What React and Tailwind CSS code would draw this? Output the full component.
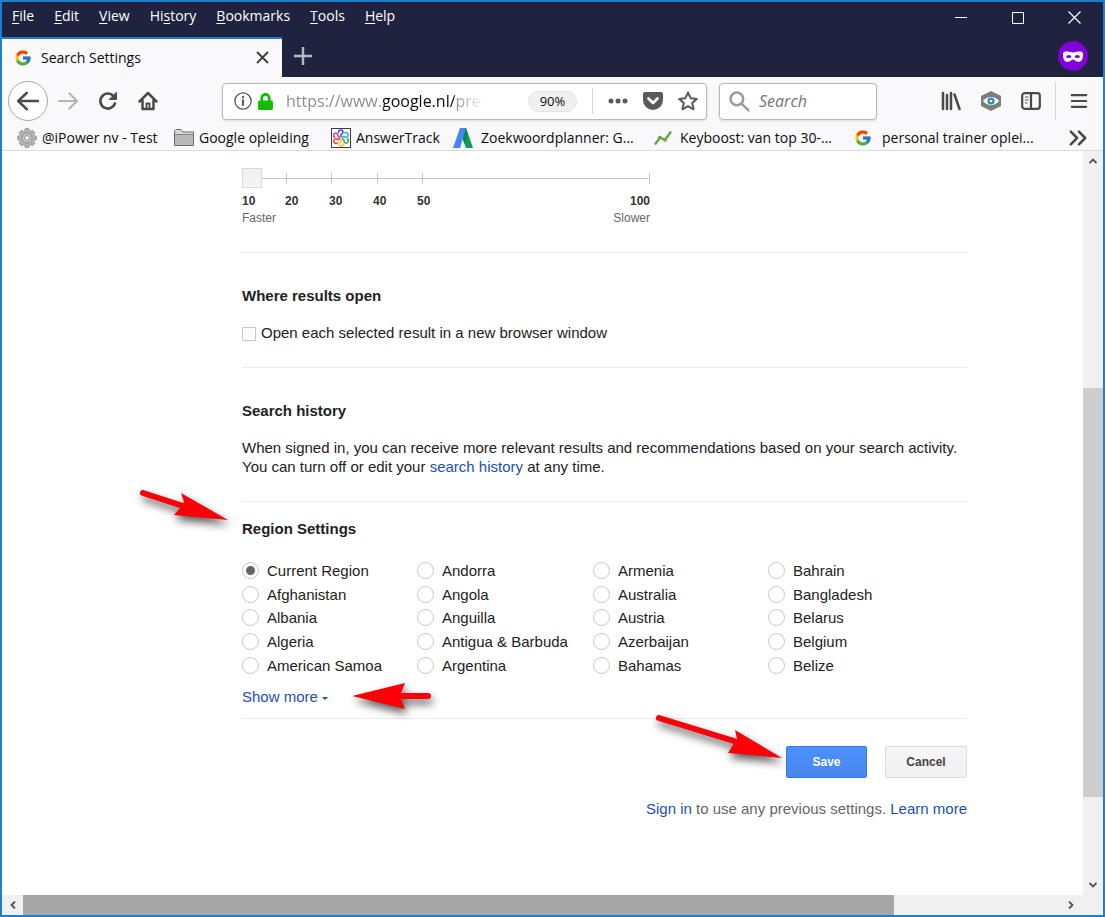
import { FcGoogle } from "react-icons/fc";
import { FaLock } from "react-icons/fa";

const MENU = [
  ["", "F", "ile"],
  ["", "E", "dit"],
  ["", "V", "iew"],
  ["Hi", "s", "tory"],
  ["", "B", "ookmarks"],
  ["", "T", "ools"],
  ["", "H", "elp"],
];

const REGIONS = [
  "Current Region", "Afghanistan", "Albania", "Algeria", "American Samoa",
  "Andorra", "Angola", "Anguilla", "Antigua & Barbuda", "Argentina",
  "Armenia", "Australia", "Austria", "Azerbaijan", "Bahamas",
  "Bahrain", "Bangladesh", "Belarus", "Belgium", "Belize",
];

function Stroke({ size = 20, width = 2, className = "", children }) {
  return (
    <svg
      width={size}
      height={size}
      viewBox="0 0 20 20"
      fill="none"
      stroke="currentColor"
      strokeWidth={width}
      strokeLinecap="round"
      strokeLinejoin="round"
      className={`shrink-0 ${className}`}
      aria-hidden="true"
    >
      {children}
    </svg>
  );
}

function IconButton({ label, className = "", children }) {
  return (
    <button aria-label={label} className={`flex h-10 w-10 shrink-0 items-center justify-center text-[#4a4a4c] ${className}`}>
      {children}
    </button>
  );
}

function GearIcon() {
  return (
    <svg width="20" height="20" viewBox="0 0 20 20" className="shrink-0" aria-hidden="true">
      {[0, 45, 90, 135].map((angle) => (
        <rect key={angle} x="7.800" y=".6" width="4.400" height="18.800" rx="1.200" fill="#b4b4b4" stroke="#8c8c8c" strokeWidth=".8" transform={`rotate(${angle} 10 10)`} />
      ))}
      <circle cx="10" cy="10" r="7" fill="#b4b4b4" />
      <circle cx="10" cy="10" r="5" fill="#c9c9c9" stroke="#8f8f8f" />
      <circle cx="10" cy="10" r="2.400" fill="#f9f9fb" stroke="#8f8f8f" />
    </svg>
  );
}

function FolderIcon() {
  return (
    <svg width="20" height="18" viewBox="0 0 20 18" className="shrink-0" aria-hidden="true">
      <path d="M.5 16.500V2L2 .5h5L9 3h10.500v13.500z" fill="#d6d6d6" stroke="#6b6b6b" />
      <path d="M1 6h18v10H1z" fill="#b9b9b9" />
      <path d="M1 5.500h18" stroke="#858585" />
    </svg>
  );
}

function AnswerTrackIcon() {
  const petals = ["#3b49c8", "#35a8e0", "#3fae49", "#f2c230", "#e8453c", "#d9429a"];
  return (
    <svg width="20" height="20" viewBox="0 0 20 20" className="shrink-0" aria-hidden="true">
      <rect x=".5" y=".5" width="19" height="19" fill="#fff" stroke="#3d3d46" />
      {petals.map((color, i) => (
        <path
          key={color}
          d="M10 8.500V6.500C12.500 6 13 2 10 2C8.500 2 7.500 3 7.500 4.200"
          fill="none"
          stroke={color}
          strokeWidth="1.500"
          strokeLinecap="round"
          transform={`rotate(${i * 60} 10 10)`}
        />
      ))}
    </svg>
  );
}

function AdwordsIcon() {
  return (
    <svg width="20" height="20" viewBox="0 0 20 20" className="shrink-0" aria-hidden="true">
      <path d="M7 0h6l7 20h-7L9 9z" fill="#0f9d58" />
      <path d="M7 0h6L7 20H0z" fill="#4285f4" />
      <path d="M13 0l2 6-3.500 10L9.800 11z" fill="#0b8a4c" />
    </svg>
  );
}

function TrendIcon() {
  return (
    <svg width="18" height="16" viewBox="0 0 18 16" className="shrink-0" aria-hidden="true">
      <path d="M1 14.500L6 7.500l5 2.500L17 1.500" fill="none" stroke="#6da544" strokeWidth="2.400" strokeLinejoin="round" />
      <circle cx="6" cy="7.500" r="1.800" fill="#6da544" />
      <circle cx="11" cy="10" r="1.800" fill="#6da544" />
    </svg>
  );
}

function PocketIcon() {
  return (
    <svg width="20" height="18" viewBox="0 0 20 18" aria-hidden="true">
      <path d="M2 0h16a2 2 0 0 1 2 2v6a10 10 0 0 1-20 0V2a2 2 0 0 1 2-2z" fill="#5a5a5c" />
      <path d="M5.500 6.500L10 11l4.500-4.500" fill="none" stroke="#fff" strokeWidth="2.600" strokeLinecap="round" strokeLinejoin="round" />
    </svg>
  );
}

function MaskIcon() {
  return (
    <svg width="30" height="30" viewBox="0 0 30 30" className="mr-[15px]" aria-label="Private browsing" role="img">
      <circle cx="15" cy="15" r="15" fill="#8000d7" />
      <path
        d="M5 13C5 11 7 10.200 9.500 10.400C12 10.600 13 11.400 15 11.400s3-.8 5.500-1C23 10.200 25 11 25 13c0 4.500-1 7.800-4.500 7.800-3 0-4-2.300-5.500-2.300s-2.500 2.300-5.500 2.300C6 20.800 5 17.500 5 13z"
        fill="#fff"
      />
      <ellipse cx="10.700" cy="15.400" rx="2.600" ry="1.500" fill="#8000d7" />
      <ellipse cx="19.300" cy="15.400" rx="2.600" ry="1.500" fill="#8000d7" />
    </svg>
  );
}

function Bookmark({ icon, children, className = "" }) {
  return (
    <a href="#" className={`flex shrink-0 items-center whitespace-nowrap ${className}`}>
      {icon}
      {children}
    </a>
  );
}

function TitleBar() {
  return (
    <div className="flex h-[35px] items-center text-white">
      <nav className="flex flex-1 gap-5 pb-2 pl-[10px]">
        {MENU.map(([before, key, after]) => (
          <button key={key + after}>
            {before}
            <span className="underline underline-offset-2">{key}</span>
            {after}
          </button>
        ))}
      </nav>
      <div className="flex items-center pb-1">
        <button aria-label="Minimize" className="flex w-[57px] justify-center">
          <svg width="12" height="12" viewBox="0 0 12 12"><path d="M0 5.500h12" stroke="#fff" /></svg>
        </button>
        <button aria-label="Maximize" className="flex w-[57px] justify-center">
          <svg width="12" height="12" viewBox="0 0 12 12"><path d="M.5.5h11v11H.5z" fill="none" stroke="#fff" /></svg>
        </button>
        <button aria-label="Close" className="flex w-[57px] justify-center">
          <svg width="13" height="13" viewBox="0 0 13 13"><path d="M.5.5l12 12M12.500.5l-12 12" stroke="#fff" strokeWidth="1.200" /></svg>
        </button>
      </div>
    </div>
  );
}

function TabStrip() {
  return (
    <div className="flex h-10 items-stretch">
      <div className="flex w-[280px] items-center border-t-2 border-[#2478d4] bg-[#f9f9fb] pb-px pl-3 pr-[13px]">
        <FcGoogle size={18} />
        <span className="ml-[9px] flex-1">Search Settings</span>
        <button aria-label="Close tab" className="text-[#3a3a3c]">
          <svg width="13" height="13" viewBox="0 0 13 13"><path d="M1 1l11 11M12 1L1 12" stroke="currentColor" strokeWidth="1.800" /></svg>
        </button>
      </div>
      <button aria-label="New tab" className="flex w-[42px] items-center justify-center pb-[2px]">
        <svg width="18" height="18" viewBox="0 0 18 18"><path d="M9 0v18M0 9h18" stroke="#b9bac4" strokeWidth="2.400" /></svg>
      </button>
      <div className="flex flex-1 items-center justify-end pb-[2px]">
        <MaskIcon />
      </div>
    </div>
  );
}

function NavBar() {
  return (
    <div className="flex h-12 items-center pl-[6px]">
      <IconButton label="Back" className="rounded-full border border-[#a9a9ab] bg-white">
        <Stroke size={22} width={2.2}><path d="M1 10h18M9 2.500L1 10l8 7.500" /></Stroke>
      </IconButton>
      <IconButton label="Forward" className="text-[#b4b4b6]!">
        <Stroke width={2.2}><path d="M1 10h18M11.500 2.500L19 10l-7.500 7.500" /></Stroke>
      </IconButton>
      <IconButton label="Reload">
        <Stroke width={2.7}>
          <path d="M17 12.500A7.500 7.500 0 1 1 15.500 5" />
          <path d="M18.500 1.500v7h-7z" fill="currentColor" strokeWidth="1" />
        </Stroke>
      </IconButton>
      <IconButton label="Home">
        <Stroke width={2.5}>
          <path d="M1.500 10.500L10 2l8.500 8.500M4.500 9.500V18h11V9.500" />
          <path d="M8.500 17.500v-5h3v5" strokeWidth="1.800" />
        </Stroke>
      </IconButton>

      <div className="ml-[54px] flex h-[37px] min-w-0 flex-1 items-center rounded-sm border border-[#b8b8ba] bg-white shadow-sm">
        <Stroke size={18} width={1.5} className="ml-[11px] text-[#5a5a5c]">
          <circle cx="10" cy="10" r="9" />
          <path d="M10 9v5.500" strokeWidth="2.200" />
          <path d="M10 5.500v.3" strokeWidth="2.500" />
        </Stroke>
        <FaLock size={17} className="ml-[5px] shrink-0 text-[#12bc00]" />
        <input
          aria-label="Address"
          defaultValue="https://www.google.nl/preferences"
          className="ml-3 w-[198px] bg-[linear-gradient(to_right,#8a8a8c_97px,#0c0c0d_97px,#0c0c0d_168px,#8a8a8c_169px,transparent_198px)] bg-clip-text text-base text-transparent outline-none"
        />
        <div className="flex-1" />
        <button className="h-[21px] w-[49px] shrink-0 rounded-full border border-[#e3e3e5] bg-[#f0f0f1] text-[13px] leading-[19px]">90%</button>
        <div className="mx-[15px] h-[26px] w-px bg-[#d7d7db]" />
        <button aria-label="Page actions" className="shrink-0 text-[#5a5a5c]">
          <svg width="20" height="6" viewBox="0 0 20 6" fill="currentColor"><circle cx="3" cy="3" r="2.500" /><circle cx="10" cy="3" r="2.500" /><circle cx="17" cy="3" r="2.500" /></svg>
        </button>
        <button aria-label="Save to Pocket" className="ml-[15px] shrink-0"><PocketIcon /></button>
        <button aria-label="Bookmark this page" className="ml-[15px] mr-2 shrink-0 text-[#5a5a5c]">
          <Stroke width={2}><path d="M10 1.500l2.600 5.700 6.200.7-4.600 4.200 1.300 6.200L10 15.200l-5.500 3.100 1.300-6.200L1.200 7.900l6.200-.7z" /></Stroke>
        </button>
      </div>

      <div className="ml-3 flex h-[37px] w-[158px] shrink-0 items-center rounded-sm border border-[#b8b8ba] bg-white shadow-sm">
        <Stroke size={21} width={2.4} className="ml-[9px] text-[#9b9b9d]">
          <circle cx="7.500" cy="7.500" r="6" />
          <path d="M12 12l6.500 6.500" />
        </Stroke>
        <input aria-label="Search" placeholder="Search" className="ml-[9px] w-full min-w-0 text-base italic outline-none placeholder:text-[#757577]" />
      </div>

      <IconButton label="Library" className="ml-[54px]">
        <Stroke width={2.5}><path d="M2 2v16M6 4v14M10 2v16M13.500 3.500l5 14.500" /></Stroke>
      </IconButton>
      <IconButton label="Preview extension">
        <svg width="20" height="20" viewBox="0 0 20 20">
          <path d="M10 0l10 5v10l-10 5L0 15V5z" fill="#7d7d7f" />
          <path d="M2 10c4-5.500 12-5.500 16 0-4 5.500-12 5.500-16 0z" fill="#fff" />
          <circle cx="10" cy="10" r="3.600" fill="#2790b5" />
          <circle cx="10" cy="10" r="1.300" fill="#fff" />
        </svg>
      </IconButton>
      <IconButton label="Sidebars">
        <Stroke width={2.2}>
          <rect x="1.200" y="2.200" width="17.600" height="15.600" rx="2.500" />
          <path d="M10 2v16" />
          <path d="M4.500 6h2.500M4.500 9h2.500M4.500 12h1.500" strokeWidth="1.200" />
        </Stroke>
      </IconButton>
      <div className="ml-1 h-[38px] w-px shrink-0 bg-[#d7d7db]" />
      <IconButton label="Open menu" className="ml-[3px] mr-1">
        <Stroke size={18} width={2.4}><path d="M2 3.500h16M2 10h16M2 16.500h16" /></Stroke>
      </IconButton>
    </div>
  );
}

function BookmarksBar() {
  return (
    <div className="flex h-[26px] items-center border-b border-[#dcdce0] pl-[15px]">
      <Bookmark className="w-[157px] gap-[5px]" icon={<GearIcon />}>@iPower nv - Test</Bookmark>
      <Bookmark className="w-[157px] gap-[5px]" icon={<FolderIcon />}>Google opleiding</Bookmark>
      <Bookmark className="w-[122px] gap-[5px]" icon={<AnswerTrackIcon />}>AnswerTrack</Bookmark>
      <Bookmark className="w-[201px] gap-2" icon={<AdwordsIcon />}>Zoekwoordplanner: G...</Bookmark>
      <Bookmark className="w-[200px] gap-2" icon={<TrendIcon />}>Keyboost: van top 30-...</Bookmark>
      <Bookmark className="gap-[10px]" icon={<FcGoogle size={18} />}>personal trainer oplei...</Bookmark>
      <div className="flex-1" />
      <button aria-label="More bookmarks" className="mr-4 text-[#4a4a4c]">
        <Stroke size={18} width={2.8}><path d="M2 3l7 7-7 7M11 3l7 7-7 7" /></Stroke>
      </button>
    </div>
  );
}

function Arrow({ width, height, shaft, head, className }) {
  return (
    <svg
      width={width}
      height={height}
      viewBox={`0 0 ${width} ${height}`}
      className={`pointer-events-none absolute overflow-visible drop-shadow-[2px_5px_4px_rgba(0,0,0,0.65)] ${className}`}
      aria-hidden="true"
    >
      <path d={shaft} stroke="#fb0007" strokeWidth="6" strokeLinecap="round" />
      <path d={head} fill="#fb0007" />
    </svg>
  );
}

function ResultsSlider() {
  return (
    <section className="h-[101px] w-[408px] pt-[17px] text-xs">
      <div className="grid h-5 items-center">
        <div className="col-start-1 row-start-1 grid h-[11px] grid-cols-[45px_45px_46px_45px_1fr]">
          {[20, 30, 40, 50, 100].map((n) => (
            <span key={n} className="border-r border-[#c8c8c8]" />
          ))}
        </div>
        <input
          type="range"
          aria-label="Results per page"
          min="10"
          max="100"
          step="10"
          defaultValue="10"
          className="col-start-1 row-start-1 h-5 w-full appearance-none bg-transparent [&::-webkit-slider-runnable-track]:h-5 [&::-webkit-slider-runnable-track]:bg-[linear-gradient(#c8c8c8,#c8c8c8)] [&::-webkit-slider-runnable-track]:bg-[length:100%_1px] [&::-webkit-slider-runnable-track]:bg-center [&::-webkit-slider-runnable-track]:bg-no-repeat [&::-webkit-slider-thumb]:h-5 [&::-webkit-slider-thumb]:w-5 [&::-webkit-slider-thumb]:appearance-none [&::-webkit-slider-thumb]:border [&::-webkit-slider-thumb]:border-[#dadada] [&::-webkit-slider-thumb]:bg-[#f2f2f2]"
        />
      </div>
      <div className="mt-1 grid grid-cols-[43px_44px_44px_44px_1fr_auto] font-bold leading-[18px] text-[#333]">
        <span>10</span>
        <span>20</span>
        <span>30</span>
        <span>40</span>
        <span>50</span>
        <span>100</span>
      </div>
      <div className="flex justify-between leading-4 text-[#666]">
        <span>Faster</span>
        <span>Slower</span>
      </div>
    </section>
  );
}

function Settings() {
  return (
    <main className="min-w-0 flex-1 overflow-hidden bg-white pb-[74px] pl-[240px] text-[15px] leading-[19px] text-[#222]">
      <form className="max-w-[725px]" onSubmit={(e) => e.preventDefault()}>
        <ResultsSlider />

        <section className="h-[115px] border-t border-[#ebebeb] pt-[33px]">
          <h2 className="font-bold">Where results open</h2>
          <label className="mt-[18px] flex items-center">
            <input type="checkbox" className="mr-[5px] mt-[2px] h-[14px] w-[14px] appearance-none rounded-[1px] border border-[#c6c6c6]" />
            Open each selected result in a new browser window
          </label>
        </section>

        <section className="h-[134px] border-t border-[#ebebeb] pt-[33px]">
          <h2 className="font-bold">Search history</h2>
          <p className="mt-[18px]">
            When signed in, you can receive more relevant results and recommendations based on your search activity. You can turn off or edit your{" "}
            <a href="#" className="text-[#1a4fb8]">search history</a> at any time.
          </p>
        </section>

        <section className="relative h-[217px] border-t border-[#ebebeb] pt-[17px]">
          <h2 className="font-bold">Region Settings</h2>
          <Arrow
            width={96}
            height={36}
            className="-left-[104px] -top-[14px]"
            shaft="M5 5L45 18"
            head="M43 5L90 32L36 27L42 20L46 14Z"
          />
          <div className="mt-[21px] grid h-[118px] grid-flow-col grid-cols-[175px_176px_175px_1fr] grid-rows-5">
            {REGIONS.map((name, i) => (
              <label key={name} className="flex items-center gap-2 whitespace-nowrap">
                <input
                  type="radio"
                  name="region"
                  defaultChecked={i === 0}
                  className="h-[17px] w-[17px] shrink-0 appearance-none rounded-full border border-[#c6c6c6] checked:bg-[radial-gradient(circle,#666_4px,transparent_5px)]"
                />
                {name}
              </label>
            ))}
          </div>
          <div className="mt-[10px] flex">
            <div className="relative">
              <button type="button" className="flex items-center gap-1 text-[#1a4fb8]">
                Show more
                <svg width="6" height="3" viewBox="0 0 6 3" className="mt-1"><path d="M0 0h6L3 3z" fill="currentColor" /></svg>
              </button>
              <Arrow
                width={84}
                height={28}
                className="left-[108px] -top-[5px]"
                shaft="M50 14H78"
                head="M2 14L55 1L51 11V17L55 27Z"
              />
            </div>
          </div>
        </section>

        <section className="border-t border-[#ebebeb] pt-[27px]">
          <div className="flex justify-end gap-[18px] text-xs font-bold">
            <div className="relative">
              <button className="h-8 w-[81px] rounded-xs border border-[#3079ed] bg-linear-to-b from-[#4d90fe] to-[#4787ed] text-white">Save</button>
              <Arrow
                width={130}
                height={46}
                className="-left-[132px] -top-[33px]"
                shaft="M5 5L80 28"
                head="M81 17L128 45L74 40L79 32L83 26Z"
              />
            </div>
            <button type="button" className="h-8 w-[82px] rounded-xs border border-[#dcdcdc] bg-linear-to-b from-[#f5f5f5] to-[#f1f1f1] text-[#444]">Cancel</button>
          </div>
          <p className="mt-[21px] text-right text-[#666]">
            <a href="#" className="text-[#1a4fb8]">Sign in</a> to use any previous settings.{" "}
            <a href="#" className="text-[#1a4fb8]">Learn more</a>
          </p>
        </section>
      </form>
    </main>
  );
}

function ScrollArrow({ label, d, className }) {
  return (
    <button aria-label={label} className={`flex shrink-0 items-center justify-center ${className}`}>
      <svg width="8" height="8" viewBox="0 0 8 8"><path d={d} fill="none" stroke="#505050" strokeWidth="1.800" /></svg>
    </button>
  );
}

export default function App() {
  return (
    <div className="flex min-h-screen flex-col border-2 border-[#1c80d2] bg-[#f0f0f0] font-['Liberation_Sans',Arial,sans-serif]">
      <header className="bg-[#1f2340] font-['Open_Sans','Noto_Sans',sans-serif] text-sm leading-5 text-[#0c0c0d]">
        <TitleBar />
        <TabStrip />
        <div className="bg-[#f9f9fb]">
          <NavBar />
          <BookmarksBar />
        </div>
      </header>

      <div className="flex flex-1">
        <Settings />
        <div className="flex w-5 shrink-0 flex-col">
          <ScrollArrow label="Scroll up" d="M.5 6L4 2.500 7.500 6" className="h-5" />
          <div className="grow-[217]" />
          <div className="grow-[409] bg-[#cdcdcd]" />
          <div className="grow-[78]" />
          <ScrollArrow label="Scroll down" d="M.5 2L4 5.500 7.500 2" className="h-5" />
        </div>
      </div>

      <div className="flex h-5 pr-[22px]">
        <ScrollArrow label="Scroll left" d="M6 .5L2.500 4 6 7.500" className="w-[21px]" />
        <div className="grow-[871] bg-[#a6a6a6]" />
        <div className="grow-[166]" />
        <ScrollArrow label="Scroll right" d="M2 .5L5.500 4 2 7.500" className="w-[21px]" />
      </div>
    </div>
  );
}
